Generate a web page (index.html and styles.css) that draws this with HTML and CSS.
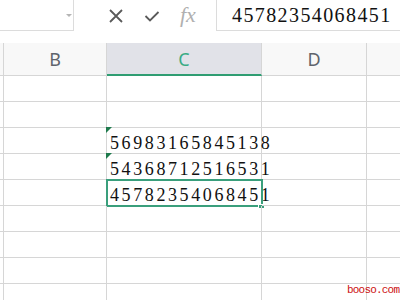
FILE: index.html
```html
<!DOCTYPE html>
<html lang="en">
<head>
    <meta charset="UTF-8">
    <title>Sheet</title>
    <link rel="stylesheet" href="styles.css">
</head>
<body>

    <div class="toolbar">
        <div class="name-box"><span class="drop"></span></div>
        <div class="tools">
            <svg class="icon" width="16" height="16" viewBox="0 0 16 16">
                <path d="M2 2 L14 14 M14 2 L2 14" stroke="#5a5a5a" stroke-width="1.8" fill="none"/>
            </svg>
            <svg class="icon" width="16" height="16" viewBox="0 0 16 16">
                <path d="M1.5 8 L6 12.5 L14.5 4" stroke="#5a5a5a" stroke-width="1.8" fill="none"/>
            </svg>
            <span class="fx">fx</span>
        </div>
        <div class="formula">45782354068451</div>
    </div>

    <div class="sheet">
        <!-- column headers -->
        <div class="cell head"></div>
        <div class="cell head">B</div>
        <div class="cell head active">C</div>
        <div class="cell head">D</div>
        <div class="cell head"></div>

        <div class="cell"></div><div class="cell"></div><div class="cell"></div><div class="cell"></div><div class="cell"></div>
        <div class="cell"></div><div class="cell"></div><div class="cell"></div><div class="cell"></div><div class="cell"></div>

        <div class="cell"></div><div class="cell"></div>
        <div class="cell num flag">56983165845138</div>
        <div class="cell"></div><div class="cell"></div>

        <div class="cell"></div><div class="cell"></div>
        <div class="cell num flag">54368712516531</div>
        <div class="cell"></div><div class="cell"></div>

        <div class="cell"></div><div class="cell"></div>
        <div class="cell num selected">45782354068451<span class="handle"></span></div>
        <div class="cell"></div><div class="cell"></div>

        <div class="cell"></div><div class="cell"></div><div class="cell"></div><div class="cell"></div><div class="cell"></div>
        <div class="cell"></div><div class="cell"></div><div class="cell"></div><div class="cell"></div><div class="cell"></div>
        <div class="cell"></div><div class="cell"></div><div class="cell"></div><div class="cell"></div><div class="cell"></div>
        <div class="cell"></div><div class="cell"></div><div class="cell"></div><div class="cell"></div><div class="cell"></div>
    </div>

    <div class="mark">booso.com</div>

</body>
</html>
```

FILE: styles.css
```css
* {
    margin: 0;
    padding: 0;
    box-sizing: border-box;
}

body {
    width: 400px;
    height: 300px;
    overflow: hidden;
    background: #ffffff;
    font-family: 'Noto Sans', sans-serif;
    position: relative;
}

/* Formula bar */
.toolbar {
    height: 43px;
    display: flex;
    align-items: flex-start;
    background: #ffffff;
}

.name-box {
    width: 75px;
    height: 32px;
    margin-top: -1px;
    margin-left: -1px;
    border: 1px solid #dcdcdc;
    position: relative;
}

.drop {
    position: absolute;
    left: 66px;
    top: 14px;
    border-left: 3px solid transparent;
    border-right: 3px solid transparent;
    border-top: 3px solid #b5b5b5;
}

.tools {
    width: 142px;
    height: 31px;
    display: flex;
    align-items: center;
    padding-left: 34px;
    gap: 20px;
}

.fx {
    font-family: 'Liberation Serif', serif;
    font-style: italic;
    font-size: 22px;
    color: #b0b0b0;
    margin-top: -2px;
}

.formula {
    flex: 1;
    height: 32px;
    margin-top: -1px;
    border: 1px solid #dcdcdc;
    border-right: none;
    padding-left: 15px;
    font-family: 'Liberation Serif', serif;
    font-size: 20px;
    letter-spacing: 1.4px;
    line-height: 30px;
    color: #111;
}

/* Grid */
.sheet {
    display: grid;
    grid-template-columns: 4px 103px 155px 105px 40px;
    grid-auto-rows: 26px;
    grid-template-rows: 33px;
}

.cell {
    border-right: 1px solid #d6d6d6;
    border-bottom: 1px solid #d6d6d6;
    position: relative;
}

.head {
    background: #f8f8f8;
    text-align: center;
    font-size: 18px;
    line-height: 32px;
    color: #5f646c;
}

.head.active {
    background: #e1e2e8;
    color: #3aab84;
    border-bottom: 2px solid #2f9d72;
}

.num {
    padding-left: 3px;
    font-family: 'Liberation Serif', serif;
    font-size: 18px;
    letter-spacing: 2.6px;
    line-height: 30px;
    color: #111;
    white-space: nowrap;
}

.flag::before {
    content: '';
    position: absolute;
    left: -1px;
    top: -1px;
    border-top: 6px solid #1e7a4c;
    border-right: 6px solid transparent;
}

.selected {
    outline: 2px solid #3a9f7c;
    outline-offset: -1px;
}

.handle {
    position: absolute;
    right: -4px;
    bottom: -4px;
    width: 7px;
    height: 5px;
    background: #3a9f7c;
    border: 1px solid #ffffff;
}

.mark {
    position: absolute;
    left: 347px;
    top: 284px;
    font-family: 'Liberation Mono', monospace;
    font-size: 11px;
    letter-spacing: -0.8px;
    color: #cc1111;
    white-space: nowrap;
}
```
